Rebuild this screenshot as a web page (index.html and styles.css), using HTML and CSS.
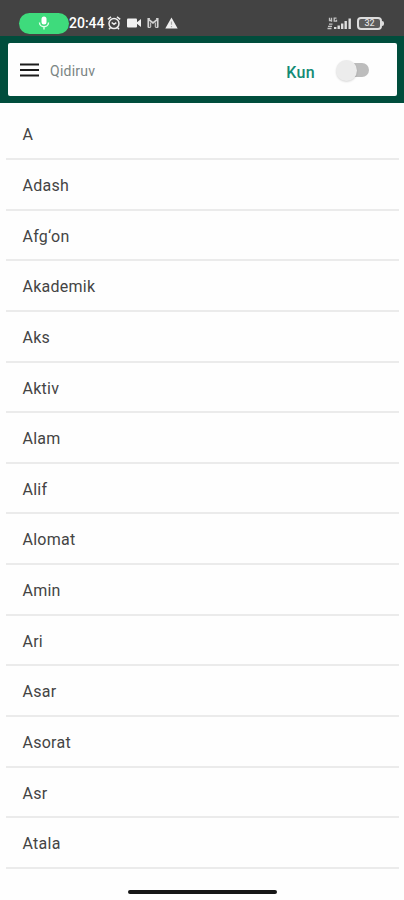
FILE: index.html
```
<!DOCTYPE html>
<html lang="uz">
<head>
<meta charset="utf-8">
<title>Qidiruv</title>
<link rel="stylesheet" href="styles.css">
</head>
<body>
<div class="status">
  <div class="mic"><svg width="12" height="14" viewBox="0 0 12 14"><rect x="3.5" y="0.5" width="5" height="8" rx="2.5" fill="#fff"/><path d="M1.5 6.5a4.5 4.2 0 0 0 9 0M6 10.5v3" fill="none" stroke="#e2ffec" stroke-width="1.4"/></svg></div>
  <span class="time">20:44</span>
  <svg class="alarm" width="14" height="14" viewBox="0 0 14 14" fill="none" stroke="#eee" stroke-width="1.5"><circle cx="7" cy="7.6" r="5"/><path d="M.8 3.4 4 .9M13.2 3.4 10 .9M4.7 6.5 7 8.4l2.3-1.8M3.4 11.7l-1.4 1.6M10.6 11.7l1.4 1.6"/></svg>
  <svg class="icon" width="14" height="10" viewBox="0 0 14 10" fill="#f2f2f2"><rect y=".5" width="10" height="9" rx="1"/><path d="M9 5 14 1v8z"/></svg>
  <svg class="icon" width="12" height="10" viewBox="0 0 12 10" fill="none" stroke="#d5d5d5"><path d="M1.3 9.5V1.2L6 5l4.7-3.8v8.3" stroke-width="1.7"/><path d="M3.7 9V4.5M8.3 9V4.500M1 .6h2M9 .6h2M1 9.4h2.7M8.3 9.4H11" stroke-width="1"/></svg>
  <svg class="icon" width="13" height="12" viewBox="0 0 13 12"><path d="M6.5.5 12.7 11.500H.3z" fill="#eee"/><path d="M6.5 4.500v3.200M6.500 9v1.200" stroke="#aaa" stroke-width="1.2"/></svg>
  <svg class="signal" width="25" height="13" viewBox="0 0 25 13"><g fill="none" stroke="#c4c4c4" stroke-width="1.3"><path d="M2.500.8v2.700h2.700M4.500.8v4M9.500 1.200H7.200v3h2.300V2.800"/><path d="M.5 11.500h4M1 9.300h4M2 7.200h3.500"/></g><path d="M7 12v-2h2.400v2zM10.500 12V8.500h2.400V12zM14 12V6.500h2.400V12zM17.500 12V4h2.400v8zM21.500 12V1.500h2.400V12z" fill="#ddd"/></svg>
  <div class="battery"><span>32</span></div>
</div>
<header class="header">
  <div class="search">
    <svg class="menu" width="19" height="14" viewBox="0 0 19 14" stroke="#1c1c1c" stroke-width="2"><path d="M0 1.500h19M0 7h19M0 12.500h19"/></svg>
    <span class="hint">Qidiruv</span>
    <span class="mode">Kun</span>
    <div class="switch"><div class="knob"></div></div>
  </div>
</header>
<main class="list">
  <div class="row">A</div>
  <div class="row">Adash</div>
  <div class="row">Afg‘on</div>
  <div class="row">Akademik</div>
  <div class="row">Aks</div>
  <div class="row">Aktiv</div>
  <div class="row">Alam</div>
  <div class="row">Alif</div>
  <div class="row">Alomat</div>
  <div class="row">Amin</div>
  <div class="row">Ari</div>
  <div class="row">Asar</div>
  <div class="row">Asorat</div>
  <div class="row">Asr</div>
  <div class="row">Atala</div>
</main>
<div class="home"></div>
</body>
</html>
```
FILE: styles.css
```
* { box-sizing: border-box; }
body {
  margin: 0;
  width: 404px;
  height: 900px;
  overflow: hidden;
  background: #fefefe;
  font-family: Roboto, "Liberation Sans", sans-serif;
}
svg { display: block; flex: none; }
.status {
  height: 36px;
  padding: 10px 20px 0 19px;
  display: flex;
  align-items: center;
  background: #434343;
}
.mic {
  width: 50px;
  height: 21px;
  border-radius: 11px;
  background: #3edb7c;
  display: flex;
  align-items: center;
  justify-content: center;
}
.time {
  width: 38px;
  color: #fff;
  font-size: 14px;
  font-weight: 500;
  line-height: 20px;
  white-space: nowrap;
}
.icon { margin-left: 6px; }
.signal { margin-left: auto; }
.battery {
  position: relative;
  width: 25px;
  height: 13px;
  margin: 0 2px 0 5px;
  border: 2px solid #ddd;
  border-radius: 4px;
  background: #5c5c5c;
  display: flex;
  align-items: center;
  justify-content: center;
  color: #ddd;
  font-size: 9px;
  font-weight: 500;
  line-height: 8px;
}
.battery::after {
  content: "";
  position: absolute;
  right: -4px;
  top: 2px;
  width: 2px;
  height: 5px;
  border-radius: 0 2px 2px 0;
  background: #ddd;
}
.header {
  height: 67px;
  padding: 7px 7px 0 8px;
  background: #004d3c;
}
.search {
  height: 53px;
  padding: 0 28px 0 12px;
  border-radius: 2px;
  background: #fefefe;
  display: flex;
  align-items: center;
}
.hint {
  margin: 2px 0 0 11px;
  color: #7b8584;
  font-size: 14px;
  letter-spacing: 0.25px;
}
.mode {
  margin: 5px 21px 0 auto;
  color: #138b75;
  font-size: 16px;
  font-weight: 500;
  letter-spacing: 0.3px;
}
.switch {
  position: relative;
  width: 33px;
  height: 22px;
  display: flex;
  align-items: center;
  justify-content: flex-end;
}
.switch::before {
  content: "";
  width: 28px;
  height: 14px;
  border-radius: 7px;
  background: #bdbdbd;
}
.knob {
  position: absolute;
  left: 0;
  top: 1px;
  width: 21px;
  height: 21px;
  border-radius: 50%;
  background: #ececec;
  box-shadow: 0 1px 2px rgba(0, 0, 0, 0.15);
}
.list { padding: 6.4px 5px 0 6px; }
.row {
  height: 50.640px;
  padding-left: 16.5px;
  border-bottom: 2px solid #ebebeb;
  color: #444;
  font-size: 16px;
  line-height: 51px;
  letter-spacing: 0.25px;
}
.home {
  width: 149px;
  height: 4px;
  margin: 21px 0 0 128px;
  border-radius: 2px;
  background: #161616;
}
```
